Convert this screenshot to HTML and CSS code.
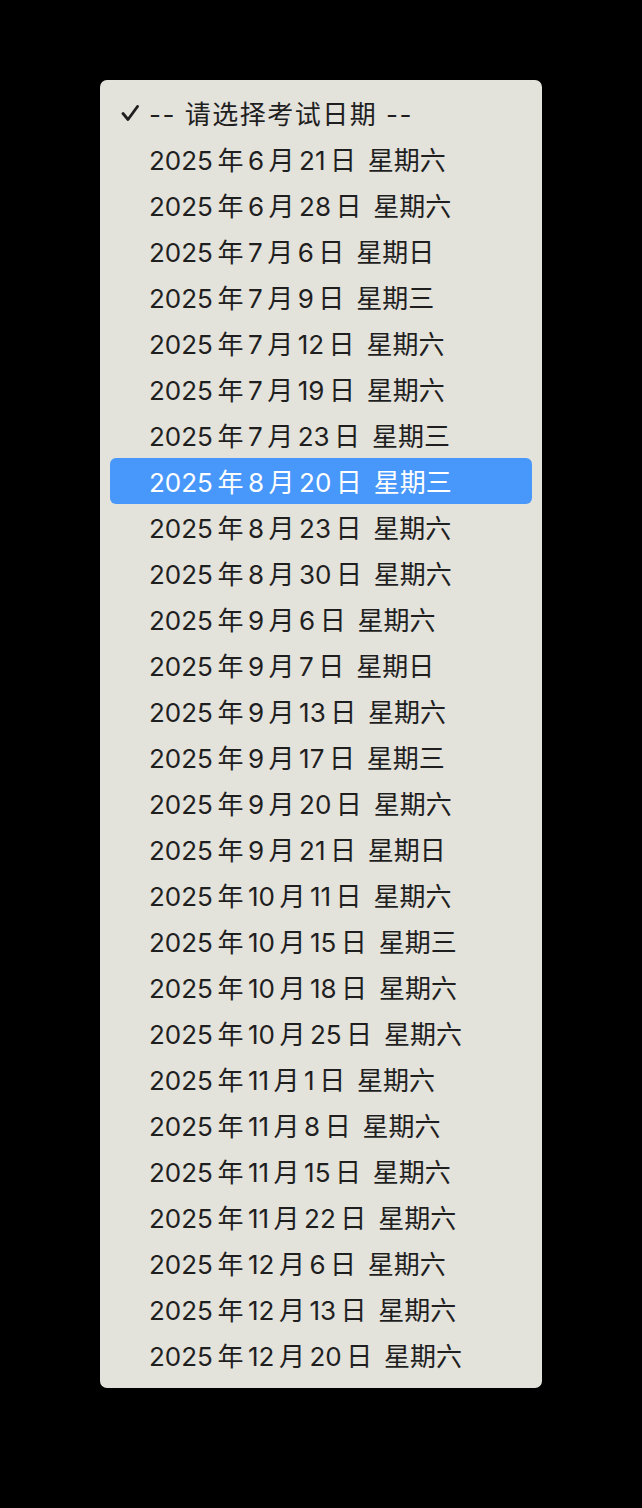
FILE: index.html
```html
<!DOCTYPE html>
<html lang="zh-CN">
<head>
<meta charset="utf-8">
<title>请选择考试日期</title>
<link rel="stylesheet" href="styles.css">
</head>
<body>
<div class="menu">
  <div class="item checked"><svg class="check" width="18" height="18" viewBox="0 0 18 18"><path d="M2 9.5 L7 15.5 L16.5 2.5" fill="none" stroke="#1f1f1f" stroke-width="2.8" stroke-linecap="round" stroke-linejoin="round"/></svg><span class="head">-- 请选择考试日期 --</span></div>
  <div class="item">2025<i>年</i>6<i>月</i>21<i>日</i> 星期六</div>
  <div class="item">2025<i>年</i>6<i>月</i>28<i>日</i> 星期六</div>
  <div class="item">2025<i>年</i>7<i>月</i>6<i>日</i> 星期日</div>
  <div class="item">2025<i>年</i>7<i>月</i>9<i>日</i> 星期三</div>
  <div class="item">2025<i>年</i>7<i>月</i>12<i>日</i> 星期六</div>
  <div class="item">2025<i>年</i>7<i>月</i>19<i>日</i> 星期六</div>
  <div class="item">2025<i>年</i>7<i>月</i>23<i>日</i> 星期三</div>
  <div class="item active">2025<i>年</i>8<i>月</i>20<i>日</i> 星期三</div>
  <div class="item">2025<i>年</i>8<i>月</i>23<i>日</i> 星期六</div>
  <div class="item">2025<i>年</i>8<i>月</i>30<i>日</i> 星期六</div>
  <div class="item">2025<i>年</i>9<i>月</i>6<i>日</i> 星期六</div>
  <div class="item">2025<i>年</i>9<i>月</i>7<i>日</i> 星期日</div>
  <div class="item">2025<i>年</i>9<i>月</i>13<i>日</i> 星期六</div>
  <div class="item">2025<i>年</i>9<i>月</i>17<i>日</i> 星期三</div>
  <div class="item">2025<i>年</i>9<i>月</i>20<i>日</i> 星期六</div>
  <div class="item">2025<i>年</i>9<i>月</i>21<i>日</i> 星期日</div>
  <div class="item">2025<i>年</i>10<i>月</i>11<i>日</i> 星期六</div>
  <div class="item">2025<i>年</i>10<i>月</i>15<i>日</i> 星期三</div>
  <div class="item">2025<i>年</i>10<i>月</i>18<i>日</i> 星期六</div>
  <div class="item">2025<i>年</i>10<i>月</i>25<i>日</i> 星期六</div>
  <div class="item">2025<i>年</i>11<i>月</i>1<i>日</i> 星期六</div>
  <div class="item">2025<i>年</i>11<i>月</i>8<i>日</i> 星期六</div>
  <div class="item">2025<i>年</i>11<i>月</i>15<i>日</i> 星期六</div>
  <div class="item">2025<i>年</i>11<i>月</i>22<i>日</i> 星期六</div>
  <div class="item">2025<i>年</i>12<i>月</i>6<i>日</i> 星期六</div>
  <div class="item">2025<i>年</i>12<i>月</i>13<i>日</i> 星期六</div>
  <div class="item">2025<i>年</i>12<i>月</i>20<i>日</i> 星期六</div>
</div>
</body>
</html>
```
FILE: styles.css
```css
html, body {
  margin: 0;
  padding: 0;
  background: #000;
}
body {
  padding: 80px 0 0 100px;
  font-family: "Inter", "Noto Sans CJK SC", sans-serif;
}
.menu {
  width: 442px;
  box-sizing: border-box;
  background: #e3e2db;
  border-radius: 7px;
  padding: 10px 10px;
}
.item {
  position: relative;
  box-sizing: border-box;
  height: 46px;
  padding-top: 4px;
  line-height: 42px;
  padding-left: 39px;
  font-size: 26px;
  color: #1f1f1f;
  border-radius: 6px;
  white-space: nowrap;
}
.item i {
  font-style: normal;
  margin: 0 4.5px;
}
.head {
  letter-spacing: 1.5px;
}
.item.active {
  background: #4897fa;
  color: #fff;
}
.check {
  position: absolute;
  left: 11px;
  top: 14px;
}
```
